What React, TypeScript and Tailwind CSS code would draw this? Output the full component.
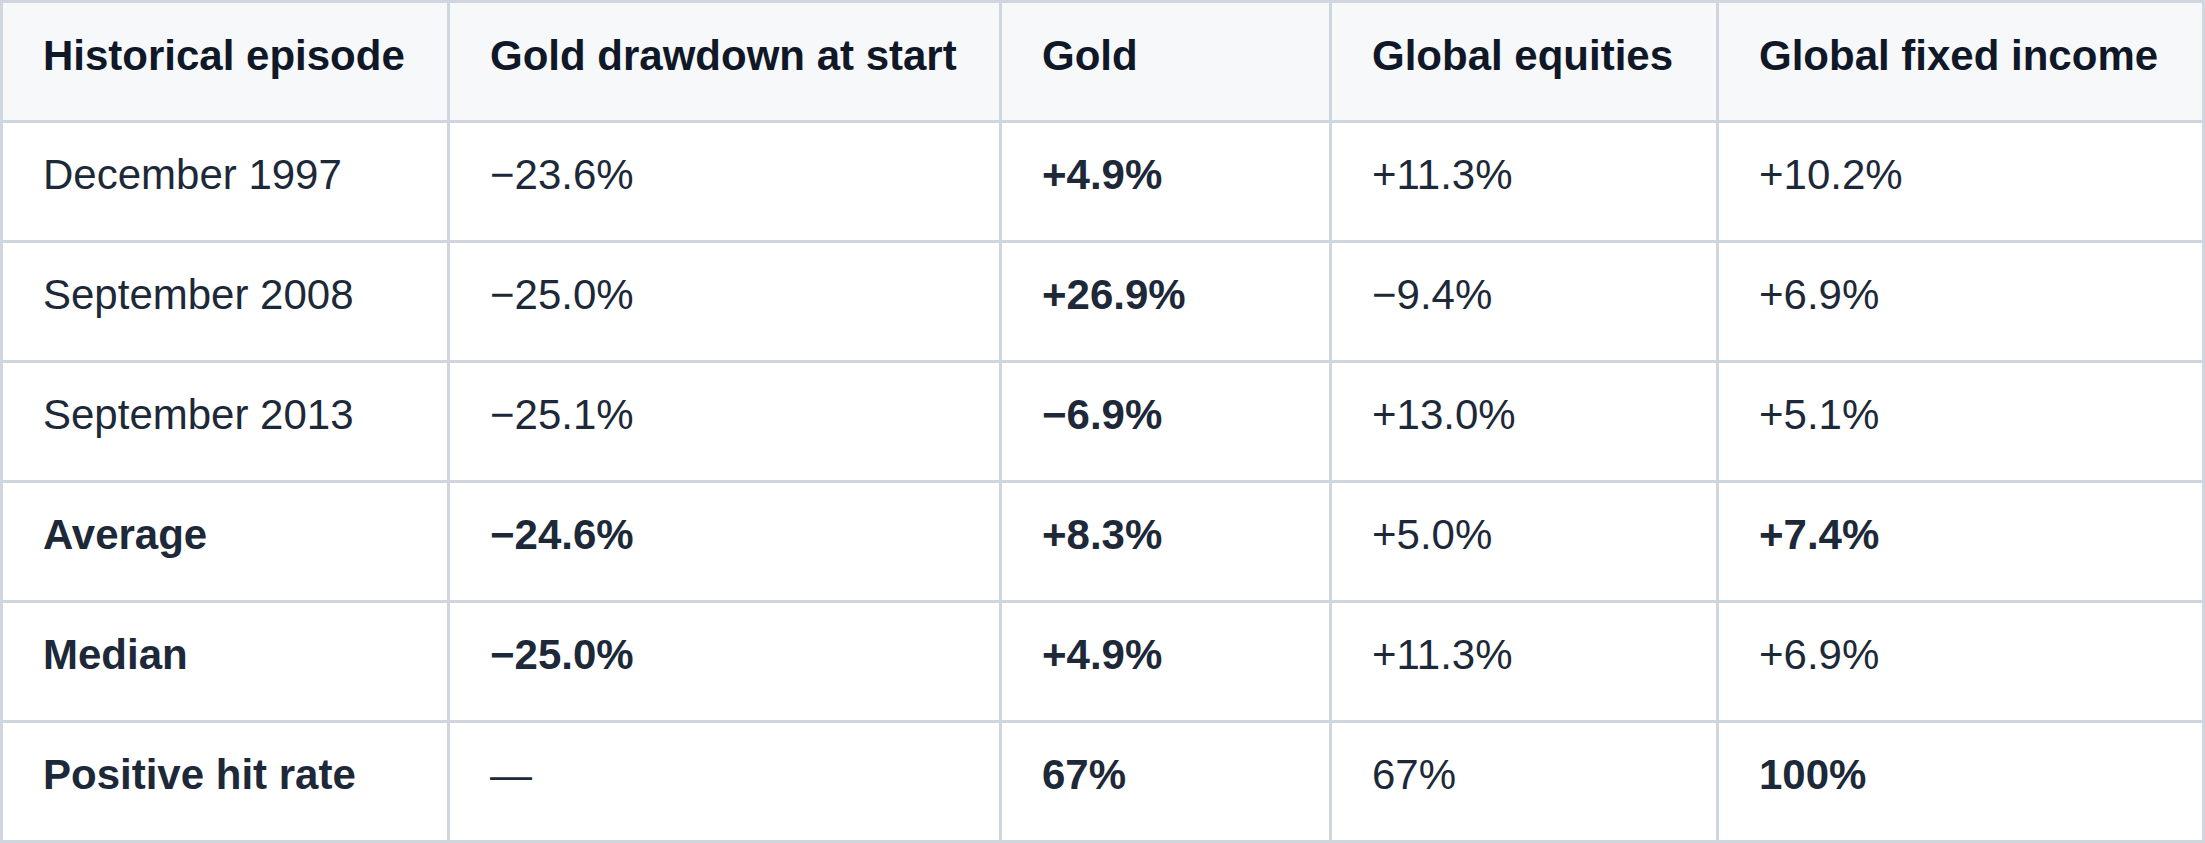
import * as React from "react";

type Cell = { text: string; bold?: boolean };

const headers = [
  "Historical episode",
  "Gold drawdown at start",
  "Gold",
  "Global equities",
  "Global fixed income",
];

const b = (text: string): Cell => ({ text, bold: true });
const r = (text: string): Cell => ({ text });

const rows: Cell[][] = [
  [r("December 1997"), r("\u221223.6%"), b("+4.9%"), r("+11.3%"), r("+10.2%")],
  [r("September 2008"), r("\u221225.0%"), b("+26.9%"), r("\u22129.4%"), r("+6.9%")],
  [r("September 2013"), r("\u221225.1%"), b("\u22126.9%"), r("+13.0%"), r("+5.1%")],
  [b("Average"), b("\u221224.6%"), b("+8.3%"), r("+5.0%"), b("+7.4%")],
  [b("Median"), b("\u221225.0%"), b("+4.9%"), r("+11.3%"), r("+6.9%")],
  [b("Positive hit rate"), r("\u2014"), b("67%"), r("67%"), b("100%")],
];

export default function App() {
  return (
    <div className="w-[2205px] h-[843px] bg-white font-['Liberation_Sans',Arial,sans-serif]">
      <div className="grid grid-cols-[444px_549px_327px_384px_483px] auto-rows-[117px] gap-[3px] p-[3px] bg-[#d0d6de]">
        {headers.map((h) => (
          <div
            key={h}
            className="bg-[#f7f8fa] pl-[40px] pt-[32px] text-[42px] leading-[42px] font-bold text-[#101828] whitespace-nowrap"
          >
            {h}
          </div>
        ))}
        {rows.map((row, i) =>
          row.map((c, j) => (
            <div
              key={`${i}-${j}`}
              className={`bg-white pl-[40px] pt-[31px] text-[42px] leading-[42px] text-[#1d2939] whitespace-nowrap ${
                c.bold ? "font-bold" : "font-normal"
              }`}
            >
              {c.text}
            </div>
          ))
        )}
      </div>
    </div>
  );
}
